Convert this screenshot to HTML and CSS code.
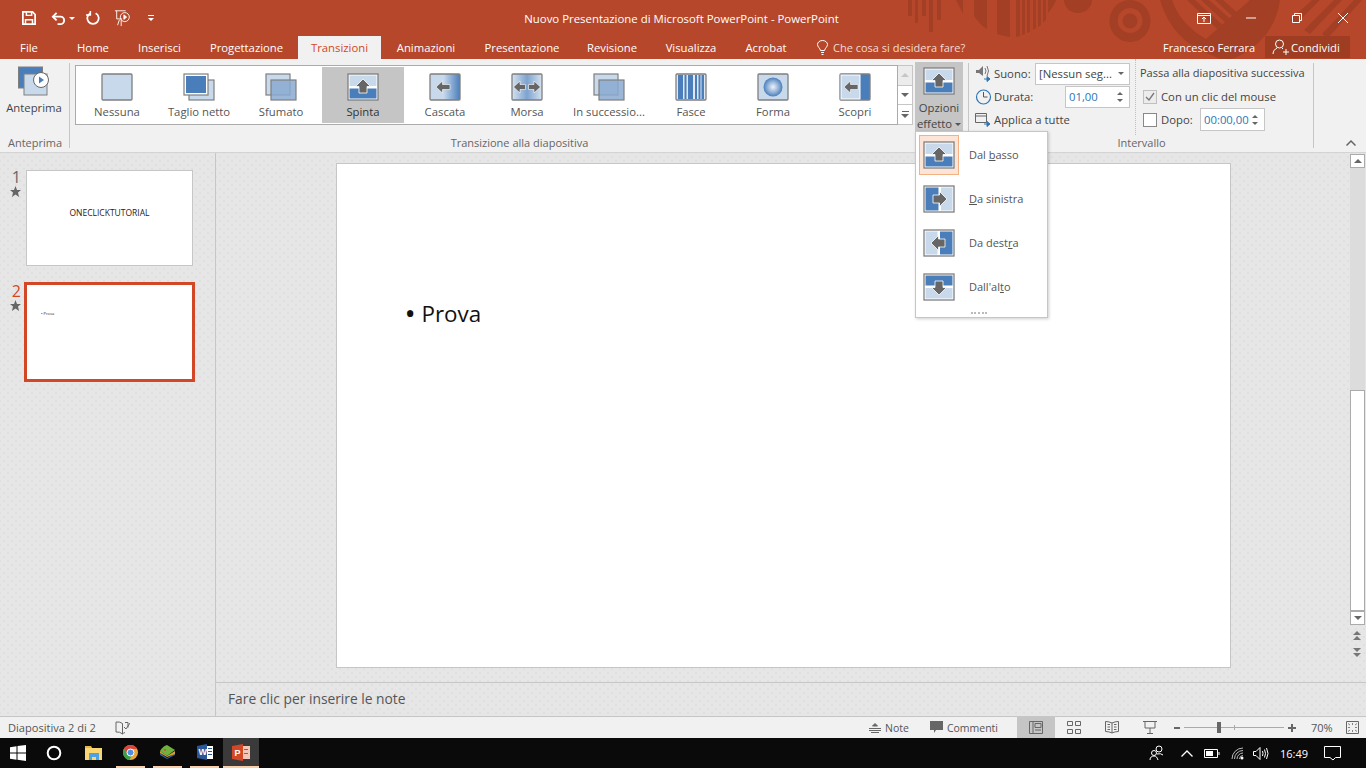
FILE: index.html
```html
<!DOCTYPE html>
<html lang="it">
<head>
    <meta charset="utf-8">
    <title>PowerPoint</title>
    <link rel="stylesheet" href="styles.css">
</head>
<body>
    <svg class="defs" width="0" height="0">
        <defs>
            <linearGradient id="fadeRight"><stop offset="0.45" stop-color="#c9d9ec"/><stop offset="1" stop-color="#4a7ebb"/></linearGradient>
            <linearGradient id="fadeMid"><stop offset="0" stop-color="#d5e1f0"/><stop offset="0.5" stop-color="#7ea3cf"/><stop offset="1" stop-color="#d5e1f0"/></linearGradient>
            <radialGradient id="fadeRound"><stop offset="0" stop-color="#eef3f9"/><stop offset="0.6" stop-color="#8fb0d6"/><stop offset="1" stop-color="#4a7ebb"/></radialGradient>
            <symbol id="t-none" viewBox="0 0 32 28"><rect x="1" y="1" width="30" height="26" rx="1" fill="#c9d9ec" stroke="#7f7f7f" stroke-width="1.3"/></symbol>
            <symbol id="t-cut" viewBox="0 0 32 28"><rect x="6" y="7" width="25" height="20" fill="#c9d9ec" stroke="#7f7f7f" stroke-width="1.2"/><rect x="1" y="1" width="24" height="21" fill="#fff" stroke="#7f7f7f" stroke-width="1.2"/><rect x="3" y="3" width="20" height="17" fill="#4a7ebb"/></symbol>
            <symbol id="t-fade" viewBox="0 0 32 28"><rect x="1" y="1" width="24" height="21" fill="#c9d9ec" stroke="#7f7f7f" stroke-width="1.2"/><rect x="6" y="7" width="25" height="20" fill="#89a9d0" fill-opacity="0.85" stroke="#7f7f7f" stroke-width="1.2"/></symbol>
            <symbol id="t-push" viewBox="0 0 32 28"><rect x="1" y="1" width="30" height="26" fill="#fff" stroke="#7f7f7f" stroke-width="1.3"/><rect x="2.500" y="2.500" width="27" height="10.500" fill="#c9d9ec"/><rect x="2.500" y="15.500" width="27" height="10" fill="#4a7ebb"/><path d="M16 6l7.500 7.500H20v6.500h-8v-6.500H8.500z" fill="#666" stroke="#fff" stroke-width=".8"/></symbol>
            <symbol id="t-left" viewBox="0 0 32 28"><rect x="1" y="1" width="30" height="26" fill="#fff" stroke="#7f7f7f" stroke-width="1.3"/><rect x="2.500" y="2.500" width="13" height="23" fill="#4a7ebb"/><rect x="18" y="2.500" width="11.500" height="23" fill="#c9d9ec"/><path d="M24 14l-7.500-7.500V10H10v8h6.500v3.500z" fill="#666" stroke="#fff" stroke-width=".8"/></symbol>
            <symbol id="t-right" viewBox="0 0 32 28"><rect x="1" y="1" width="30" height="26" fill="#fff" stroke="#7f7f7f" stroke-width="1.3"/><rect x="2.500" y="2.500" width="12" height="23" fill="#c9d9ec"/><rect x="17" y="2.500" width="12.500" height="23" fill="#4a7ebb"/><path d="M8 14l7.500-7.500V10H22v8h-6.500v3.500z" fill="#666" stroke="#fff" stroke-width=".8"/></symbol>
            <symbol id="t-top" viewBox="0 0 32 28"><rect x="1" y="1" width="30" height="26" fill="#fff" stroke="#7f7f7f" stroke-width="1.3"/><rect x="2.500" y="2.500" width="27" height="10" fill="#4a7ebb"/><rect x="2.500" y="15" width="27" height="10.500" fill="#c9d9ec"/><path d="M16 22l7.500-7.500H20V8h-8v6.500H8.500z" fill="#666" stroke="#fff" stroke-width=".8"/></symbol>
            <symbol id="t-fall" viewBox="0 0 32 28"><rect x="1" y="1" width="30" height="26" rx="1" fill="url(#fadeRight)" stroke="#7f7f7f" stroke-width="1.3"/><path d="M7 14l6.500-6v3.500H21v5h-7.500V20z" fill="#666" stroke="#fff" stroke-width=".6"/></symbol>
            <symbol id="t-clamp" viewBox="0 0 32 28"><rect x="1" y="1" width="30" height="26" rx="1" fill="url(#fadeMid)" stroke="#7f7f7f" stroke-width="1.3"/><path d="M2.500 14L9 8v3.500h5.500v5H9V20zM29.500 14L23 8v3.500h-5.500v5H23V20z" fill="#666" stroke="#fff" stroke-width=".6"/></symbol>
            <symbol id="t-bands" viewBox="0 0 32 28"><rect x="1" y="1" width="30" height="26" rx="1" fill="#dfe8f3" stroke="#7f7f7f" stroke-width="1.3"/><path d="M3 2h5v24H3zM9.500 2h2v24h-2zM13 2h5v24h-5zM20 2h2v24h-2zM23.500 2h2v24h-2zM26.500 2h2.500v24h-2.500z" fill="#4a7ebb"/></symbol>
            <symbol id="t-shape" viewBox="0 0 32 28"><rect x="1" y="1" width="30" height="26" rx="1" fill="#c9d9ec" stroke="#7f7f7f" stroke-width="1.3"/><circle cx="16" cy="14" r="9.500" fill="url(#fadeRound)"/></symbol>
            <symbol id="t-reveal" viewBox="0 0 32 28"><rect x="1" y="1" width="30" height="26" rx="1" fill="#4a7ebb" stroke="#7f7f7f" stroke-width="1.3"/><rect x="2" y="2" width="19" height="24" fill="#c9d9ec" stroke="#fff"/><path d="M5 14l6.500-6v3.500H19v5h-7.500V20z" fill="#666" stroke="#fff" stroke-width=".6"/></symbol>
        </defs>
    </svg>

    <header class="head">
        <svg class="pattern" width="466" height="59" viewBox="900 0 466 59" fill="#a33f25">
            <path d="M908 0h4v16h-4zM915 0h3v23h-3zM922 0h4v16h-4zM929 0h4v32h-4zM937 0h4v20h-4zM956 0h7v14z"/>
            <path d="M974 0h13v29q-7-4-13-13zM997 0h13v37q-7-1-13-3zM1016 0h4v36l-4 1zM1022 0h3v34l-3 1zM1027 0h3v32l-3 1zM1033 0h3v28l-3 2zM1038 0h3v25l-3 2zM1043 0h3v20l-3 3zM1048 0h8q-2 6-8 13z"/>
            <path d="M1064 0a14 13 0 0 0 28 0z"/>
            <path fill-rule="evenodd" d="M1130 0a20.500 21 0 1 1-.1 0zM1130 8a12.500 12.500 0 1 0 .1 0z"/>
            <circle cx="1130" cy="21" r="7.500"/>
            <path d="M1160 0h12q8 24 34 39l44-39h30q-4 30-28 48t-38 8q-42-14-54-56z"/>
            <path d="M1187 0h8l44 40-6 4zM1201 0h8l36 32-5 4zM1215 0h8l27 24-5 4z"/>
            <path d="M1290 20l22-20h8l-24 24zM1304 30l30-30h8l-32 34zM1322 34l32-34h8l-34 38z"/>
        </svg>
        <div class="titlebar">
            <div class="qat">
                <svg class="q-save" width="14" height="14" viewBox="0 0 16 16" fill="none" stroke="#fff" stroke-width="2"><path d="M1 1h11l3 3v11H1z"/><path d="M5 1v4h6V1M4 15v-5h8v5" stroke-width="1.700"/></svg>
                <svg class="q-undo" width="15" height="15" viewBox="0 0 16 16" fill="none" stroke="#fff" stroke-width="2"><path d="M6 2L2 6l4 4"/><path d="M2 6h8a4 4 0 0 1 0 8H7"/></svg>
                <span class="caret q-caret"></span>
                <svg class="q-redo" width="14" height="14" viewBox="0 0 16 16" fill="none" stroke="#fff" stroke-width="2"><path d="M11 2.500a6.500 6.500 0 1 1-6 0"/><path d="M5 0v4.500H0" stroke-width="1.700"/></svg>
                <svg class="q-show" width="18" height="18" viewBox="0 0 20 20" fill="none" stroke="#fff"><path d="M1 2h12M3 2v9h6M6 12l-2 6M8 12v7"/><circle cx="12" cy="9" r="5"/><path d="M11 6.500l3 2.500-3 2.500z" fill="#fff"/></svg>
                <svg class="q-more" width="8" height="8" viewBox="0 0 8 8" fill="#fff"><path d="M1 1h6v1H1zM1 4h6L4 7z"/></svg>
            </div>
            <div class="doc-title">Nuovo Presentazione di Microsoft PowerPoint - PowerPoint</div>
            <div class="winctl">
                <svg width="14" height="11" viewBox="0 0 14 11" fill="none" stroke="#fff"><path d="M.5.500h13v10H.5zM.5 2.500h13M7 9V4.500M5 6l2-2 2 2"/></svg>
                <svg class="w-min" width="10" height="2" viewBox="0 0 10 2" stroke="#fff"><path d="M0 1h10"/></svg>
                <svg class="w-max" width="10" height="10" viewBox="0 0 10 10" fill="none" stroke="#fff"><path d="M.5 2.500h7v7h-7zM2.500 2.500v-2h7v7h-2"/></svg>
                <svg class="w-close" width="10" height="10" viewBox="0 0 10 10" stroke="#fff"><path d="M0 0l10 10M10 0L0 10"/></svg>
            </div>
        </div>
        <nav class="tabs">
            <a class="tab">File</a>
            <a class="tab">Home</a>
            <a class="tab">Inserisci</a>
            <a class="tab">Progettazione</a>
            <a class="tab active">Transizioni</a>
            <a class="tab">Animazioni</a>
            <a class="tab">Presentazione</a>
            <a class="tab">Revisione</a>
            <a class="tab">Visualizza</a>
            <a class="tab">Acrobat</a>
            <div class="tell">
                <svg width="11" height="15" viewBox="0 0 11 15" fill="none" stroke="#fff"><path d="M3.500 10.500C3 8 .5 7 .5 4.500a5 4 0 0 1 10 0c0 2.500-2.500 3.500-3 6zM4 12.500h3M4.500 14.500h2"/></svg>
                <span>Che cosa si desidera fare?</span>
            </div>
            <div class="user">Francesco Ferrara</div>
            <div class="share">
                <svg width="17" height="16" viewBox="0 0 17 16" fill="none" stroke="#fff"><circle cx="7.500" cy="5" r="4"/><path d="M1 15c0-3 2-5 4-6M10 9l1 1M11 13h6M14 10v6"/></svg>
                <span>Condividi</span>
            </div>
        </nav>
    </header>

    <section class="ribbon">
        <div class="group g-preview">
            <div class="group-body preview-btn">
                <svg width="32" height="31" viewBox="0 0 32 31"><rect x=".5" y="1" width="24" height="21" fill="#4a7ebb" stroke="#7f7f7f"/><rect x="6" y="8" width="23" height="21" fill="#c9d9ec" stroke="#7f7f7f"/><circle cx="23" cy="14" r="7.500" fill="#fff" stroke="#666"/><path d="M21 10.500l5 3.500-5 3.500z" fill="#4a7ebb"/></svg>
                <span>Anteprima</span>
            </div>
            <div class="group-label">Anteprima</div>
        </div>

        <div class="group g-trans">
            <div class="group-body trans-body">
                <div class="gallery">
                    <div class="cell"><svg><use href="#t-none"/></svg><span>Nessuna</span></div>
                    <div class="cell"><svg><use href="#t-cut"/></svg><span>Taglio netto</span></div>
                    <div class="cell"><svg><use href="#t-fade"/></svg><span>Sfumato</span></div>
                    <div class="cell selected"><svg><use href="#t-push"/></svg><span>Spinta</span></div>
                    <div class="cell"><svg><use href="#t-fall"/></svg><span>Cascata</span></div>
                    <div class="cell"><svg><use href="#t-clamp"/></svg><span>Morsa</span></div>
                    <div class="cell"><svg><use href="#t-fade"/></svg><span>In successio...</span></div>
                    <div class="cell"><svg><use href="#t-bands"/></svg><span>Fasce</span></div>
                    <div class="cell"><svg><use href="#t-shape"/></svg><span>Forma</span></div>
                    <div class="cell"><svg><use href="#t-reveal"/></svg><span>Scopri</span></div>
                </div>
                <div class="gal-scroll">
                    <div class="gal-btn off"><span class="tri up"></span></div>
                    <div class="gal-btn"><span class="tri"></span></div>
                    <div class="gal-btn more"><span class="bar"></span><span class="tri"></span></div>
                </div>
                <div class="effect-btn">
                    <svg><use href="#t-push"/></svg>
                    <span>Opzioni</span>
                    <span>effetto <i class="caret dark"></i></span>
                </div>
            </div>
            <div class="group-label">Transizione alla diapositiva</div>
        </div>

        <div class="group g-timing">
            <div class="group-body timing-body">
                <div class="col-sound">
                    <div class="row">
                        <svg class="ico" width="17" height="17" viewBox="0 0 17 17"><path d="M1 5h3l4-4v10l-4-3H1z" fill="#777"/><path d="M10 3q2 3 0 6M12 1q3 5 0 10" fill="none" stroke="#777"/><path d="M9 14h5M12 11.500l3 2.500-3 2.500z" fill="#2e75b6" stroke="#2e75b6"/></svg>
                        <label class="lbl-a">Suono:</label>
                        <div class="field f-sound"><span>[Nessun seg...</span><span class="tri small"></span></div>
                    </div>
                    <div class="row">
                        <svg class="ico" width="16" height="16" viewBox="0 0 16 16" fill="none"><circle cx="8" cy="8" r="7" stroke="#2e75b6" stroke-width="1.200"/><path d="M8 3v5h4" stroke="#555"/></svg>
                        <label class="lbl-a">Durata:</label>
                        <div class="field f-num"><span class="val">01,00</span><span class="spin"><i class="tri up small"></i><i class="tri small"></i></span></div>
                    </div>
                    <div class="row">
                        <svg class="ico" width="17" height="15" viewBox="0 0 17 15" fill="none" stroke="#666"><path d="M.5 1.500h11v9H.5zM.5 4h11"/><path d="M9 12h5M12 9.500l3 2.500-3 2.500z" fill="#2e75b6" stroke="#2e75b6"/></svg>
                        <label>Applica a tutte</label>
                    </div>
                </div>
                <div class="col-advance">
                    <div class="adv-title">Passa alla diapositiva successiva</div>
                    <div class="row">
                        <span class="check on"><svg width="12" height="12" viewBox="0 0 12 12" fill="none" stroke="#777" stroke-width="1.300"><path d="M2 6l3 3 5-7"/></svg></span>
                        <label>Con un clic del mouse</label>
                    </div>
                    <div class="row">
                        <span class="check"></span>
                        <label class="lbl-b">Dopo:</label>
                        <div class="field f-num"><span class="val">00:00,00</span><span class="spin"><i class="tri up small"></i><i class="tri small"></i></span></div>
                    </div>
                </div>
            </div>
            <div class="group-label">Intervallo</div>
        </div>
        <div class="collapse"><svg width="10" height="6" viewBox="0 0 10 6" fill="none" stroke="#666" stroke-width="1.500"><path d="M.5 5.500L5 1l4.500 4.500"/></svg></div>
    </section>

    <main class="main">
        <aside class="thumbs">
            <div class="thumb-row">
                <div class="thumb-num"><span>1</span><svg width="11" height="11" viewBox="0 0 11 11"><path d="M5.500 0l1.500 4h4L8 6.500l1 4.500-3.500-2.500L2 11l1-4.500L0 4h4z" fill="#666"/></svg></div>
                <div class="thumb"><span class="thumb-title">ONECLICKTUTORIAL</span></div>
            </div>
            <div class="thumb-row current">
                <div class="thumb-num"><span>2</span><svg width="11" height="11" viewBox="0 0 11 11"><path d="M5.500 0l1.500 4h4L8 6.500l1 4.500-3.500-2.500L2 11l1-4.500L0 4h4z" fill="#666"/></svg></div>
                <div class="thumb"><span class="thumb-text">• Prova</span></div>
            </div>
        </aside>
        <div class="editor">
            <div class="stage-row">
                <div class="stage">
                    <div class="slide"><div class="slide-text"><span class="bullet">•</span>Prova</div></div>
                </div>
                <div class="vscroll">
                    <div class="vs-btn"><span class="tri up"></span></div>
                    <div class="vs-track"></div>
                    <div class="vs-thumb"></div>
                    <div class="vs-btn"><span class="tri"></span></div>
                    <svg class="vs-jump" width="10" height="30" viewBox="0 0 10 30" fill="#777"><path d="M5 1l4 4H1zM5 6l4 4H1zM1 18h8l-4 4zM1 23h8l-4 4z"/></svg>
                </div>
            </div>
            <div class="notes">Fare clic per inserire le note</div>
        </div>
    </main>

    <footer class="status">
        <span class="st-count">Diapositiva 2 di 2</span>
        <svg class="st-proof" width="15" height="14" viewBox="0 0 15 14" fill="none" stroke="#666"><path d="M7.500 2.500Q5 .5 1 1v10q4-.5 6.500 2v-10.500zM7.500 13q1-1 2.500-1.500M10 1.500h3v5M9 6l2 2 4-6"/></svg>
        <div class="st-right">
            <div class="st-item i-note">
                <svg width="12" height="12" viewBox="0 0 12 12" stroke="#666" fill="#666"><path d="M3.500 4L6 1.500 8.500 4zM0 6.500h12M0 8.500h12M2 10.500h8" /></svg>
                <span>Note</span>
            </div>
            <div class="st-item i-comment">
                <svg width="13" height="13" viewBox="0 0 13 13" fill="#666"><path d="M0 0h13v9H6l-2 3V9H0z"/></svg>
                <span>Commenti</span>
            </div>
            <div class="view selected"><svg width="14" height="13" viewBox="0 0 14 13" fill="none" stroke="#666"><path d="M.5.500h13v12H.5zM4 .5v12M6 2.500h6v4H6zM6 9h6"/></svg></div>
            <div class="view"><svg width="14" height="13" viewBox="0 0 14 13" fill="none" stroke="#666"><path d="M.5.500h5v4h-5zM8.500.500h5v4h-5zM.5 8.500h5v4h-5zM8.500 8.500h5v4h-5z"/></svg></div>
            <div class="view"><svg width="14" height="13" viewBox="0 0 14 13" fill="none" stroke="#666"><path d="M7 2Q4 .5.500.5v10Q4 10.500 7 12q3-1.500 6.500-1.500V.5Q10 .5 7 2zM7 2v10M2.500 3.500H5M2.500 6H5M9 3.500h2.500M9 6h2.500M9 8.500h2.500M2.500 8.500H5"/></svg></div>
            <div class="view"><svg width="14" height="13" viewBox="0 0 14 13" fill="none" stroke="#666"><path d="M0 .5h14M2 1v6h10V1M7 7v5M4 12.500h6"/></svg></div>
            <div class="zoom">
                <span class="z-btn minus"></span>
                <div class="z-track"><span class="z-mid"></span><span class="z-knob"></span></div>
                <span class="z-btn plus"></span>
            </div>
            <span class="z-val">70%</span>
            <svg class="z-fit" width="13" height="13" viewBox="0 0 13 13" fill="none" stroke="#666"><path d="M.5.500h12v12H.5z"/><path d="M4 4L2 2.500M9 4l2-1.500M4 9l-2 1.500M9 9l2 1.500M6.500 2v2M6.500 9v2M2 6.500h2M9 6.500h2" stroke-width=".8"/></svg>
        </div>
    </footer>

    <div class="menu">
        <div class="menu-item current"><span class="m-icon"><svg><use href="#t-push"/></svg></span><span class="m-text">Dal <u>b</u>asso</span></div>
        <div class="menu-item"><span class="m-icon"><svg><use href="#t-left"/></svg></span><span class="m-text"><u>D</u>a sinistra</span></div>
        <div class="menu-item"><span class="m-icon"><svg><use href="#t-right"/></svg></span><span class="m-text">Da dest<u>r</u>a</span></div>
        <div class="menu-item"><span class="m-icon"><svg><use href="#t-top"/></svg></span><span class="m-text">Dall'al<u>t</u>o</span></div>
        <div class="grip"></div>
    </div>

    <div class="taskbar">
        <svg class="tb-win" width="16" height="16" viewBox="0 0 16 16" fill="#fff"><path d="M0 2.300l6.500-1v6.300H0zM7.500 1.100L16 0v7.600H7.500zM0 8.500h6.500v6.200l-6.500-1zM7.500 8.500H16V16l-8.500-1.200z"/></svg>
        <svg class="tb-cortana" width="16" height="16" viewBox="0 0 16 16" fill="none" stroke="#fff" stroke-width="2"><circle cx="8" cy="8" r="6.300"/></svg>
        <div class="tb-app">
            <svg width="17" height="15" viewBox="0 0 17 15"><path d="M0 1h6l1 2h10v12H0z" fill="#fbd774"/><path d="M0 1h6v2H0z" fill="#e7b54b"/><path d="M4 8h10v7h-3v-3H7v3H4z" fill="#4ba3e3"/></svg>
        </div>
        <div class="tb-app open">
            <svg width="15" height="15" viewBox="0 0 15 15"><circle cx="7.500" cy="7.500" r="7.500" fill="#e8a33a"/><path d="M7.500 0A7.500 7.500 0 0 0 1 3.700L4 9h3.500V4H14A7.500 7.500 0 0 0 7.500 0z" fill="#d8473b"/><path d="M1 3.700A7.500 7.500 0 0 0 6.500 15L9 10H5z" fill="#3f9c4d"/><circle cx="7.500" cy="7.500" r="3.500" fill="#4f8fe0" stroke="#fff"/></svg>
        </div>
        <div class="tb-app open">
            <svg width="15" height="14" viewBox="0 0 15 14"><path d="M0 8l7 5 8-5v2l-8 4-7-4z" fill="#2f5fa8"/><path d="M0 6l7 5 8-5v3l-8 3-7-4z" fill="#d9a128"/><path d="M7 0l8 5-8 6-7-5q3-5 7-6z" fill="#6fb13f"/><circle cx="5" cy="5" r="1" fill="#cb4b36"/></svg>
        </div>
        <div class="tb-app open">
            <svg width="16" height="16" viewBox="0 0 16 16"><path d="M5 2h11v13H5z" fill="#fff"/><path d="M11 4h4v1h-4zM11 7h4v1h-4zM11 10h4v1h-4z" fill="#2b579a"/><path d="M0 2l10-2v16L0 14z" fill="#2b579a"/><text x="1.500" y="11" class="tb-letter">W</text></svg>
        </div>
        <div class="tb-app open active">
            <svg width="19" height="17" viewBox="0 0 19 17"><path d="M9 2h9v13H9z" fill="#f4c7b6"/><path d="M12 5h4v1h-4zM12 9h4v1h-4z" fill="#d24726"/><path d="M0 2l11-2v17L0 15z" fill="#d24726"/><text x="2.500" y="12" class="tb-letter">P</text></svg>
        </div>
        <div class="tray">
            <svg class="t-people" width="15" height="16" viewBox="0 0 15 16" fill="none" stroke="#fff"><circle cx="10" cy="4" r="3"/><circle cx="5" cy="8" r="2.500"/><path d="M1 15c0-3 2-4 4-4s3 1 4 4M8 9q4-1 6 1"/></svg>
            <svg class="t-chev" width="12" height="7" viewBox="0 0 12 7" fill="none" stroke="#fff" stroke-width="1.300"><path d="M.5 6.500L6 1l5.500 5.500"/></svg>
            <svg class="t-batt" width="16" height="9" viewBox="0 0 16 9" fill="none" stroke="#fff"><path d="M.5.500h13v8H.5z"/><path d="M2 2h7v5H2z" fill="#fff" stroke="none"/><path d="M15 3v3"/></svg>
            <svg class="t-wifi" width="13" height="13" viewBox="0 0 13 13" fill="none" stroke="#bbb"><path d="M1 12a11 11 0 0 1 11-11M3.500 12a8.500 8.500 0 0 1 8.500-8.500M6 12a6 6 0 0 1 6-6M8.500 12a3.500 3.500 0 0 1 3.500-3.500"/><circle cx="11" cy="11" r="1.500" fill="#fff" stroke="none"/></svg>
            <svg class="t-vol" width="16" height="13" viewBox="0 0 16 13" fill="none" stroke="#fff"><path d="M.5 4.500h2.500L7 .5v12l-4-4H.5zM9.500 4q1 2.500 0 5M11.500 2.500q2 4 0 8M13.500 1q3 5.500 0 11"/></svg>
            <span class="t-time">16:49</span>
            <svg class="t-note" width="17" height="15" viewBox="0 0 17 15" fill="none" stroke="#fff"><path d="M.5.500h16v11h-5L9 14l-3-2.500H.5z"/></svg>
        </div>
    </div>
</body>
</html>
```

FILE: styles.css
```css
* { box-sizing: border-box; }
html, body { margin: 0; padding: 0; }
body {
    position: relative;
    width: 1366px;
    height: 768px;
    overflow: hidden;
    display: flex;
    flex-direction: column;
    background: #f1f1f1;
    color: #444;
    font-family: "Open Sans", "Noto Sans", sans-serif;
    font-size: 11.3px;
    white-space: nowrap;
}
svg { display: block; flex: none; }
.defs { position: absolute; }

/* title bar and tabs */
.head {
    position: relative;
    height: 59px;
    flex: none;
    background: #b7472a;
    color: #fff;
}
.pattern { position: absolute; right: 0; top: 0; }
.titlebar {
    position: relative;
    height: 36px;
    display: grid;
    grid-template-columns: 1fr auto 1fr;
    align-items: center;
    padding-right: 3px;
}
.qat { display: flex; align-items: center; padding-left: 22px; }
.q-undo { margin-left: 15px; }
.q-caret { margin-left: 3px; }
.q-redo { margin-left: 11px; }
.q-show { margin-left: 14px; }
.q-more { margin-left: 15px; }
.doc-title { font-size: 11.4px; }
.winctl { display: flex; align-items: center; justify-content: flex-end; padding-right: 15px; }
.w-min { margin-left: 35px; }
.w-max { margin-left: 36px; }
.w-close { margin-left: 36px; }
.caret {
    display: inline-block;
    border-left: 3px solid transparent;
    border-right: 3px solid transparent;
    border-top: 3px solid #fff;
    vertical-align: middle;
}
.caret.dark { border-top-color: #555; }

.tabs { position: relative; display: flex; height: 23px; align-items: stretch; }
.tab { display: flex; align-items: center; justify-content: center; }
.tab:nth-child(1) { width: 58px; margin-right: 4px; }
.tab:nth-child(2) { width: 62px; }
.tab:nth-child(3) { width: 71px; }
.tab:nth-child(4) { width: 103px; }
.tab:nth-child(5) { width: 83px; }
.tab:nth-child(6) { width: 90px; }
.tab:nth-child(7) { width: 102px; }
.tab:nth-child(8) { width: 78px; }
.tab:nth-child(9) { width: 80px; }
.tab:nth-child(10) { width: 70px; }
.tab.active { background: #f1f1f1; color: #d24726; }
.tell { display: flex; align-items: center; gap: 5px; margin-left: 16px; color: #f3dcd5; width: 346px; font-size: 11px; }
.user { display: flex; align-items: center; width: 102px; font-size: 11px; }
.share {
    display: flex;
    align-items: center;
    gap: 2px;
    width: 85px;
    margin-bottom: 1px;
    padding-left: 7px;
    background: #9e3d22;
}

/* ribbon */
.ribbon {
    position: relative;
    height: 94px;
    flex: none;
    display: flex;
    background: #f1f1f1;
    border-bottom: 1px solid #d4d4d4;
}
.group { display: flex; flex-direction: column; }
.group-body { height: 77px; flex: none; }
.group-label { text-align: center; font-size: 11px; color: #666; line-height: 14px; }
.g-preview { width: 70px; padding-top: 4px; position: relative; }
.g-preview::after, .g-trans::after, .g-timing::after {
    content: "";
    position: absolute;
    right: 0;
    top: 4px;
    bottom: 4px;
    width: 1px;
    background: #c6c6c6;
}
.g-preview .group-body { height: 73px; }
.preview-btn { display: flex; flex-direction: column; align-items: center; gap: 3px; padding-top: 3px; color: #444; }
.preview-btn svg { margin-right: 2px; }
.preview-btn span { margin-right: 2px; }
.g-trans { width: 899px; position: relative; }
.trans-body { display: flex; align-items: flex-start; }
.gallery {
    display: flex;
    margin: 6px 0 0 5px;
    width: 823px;
    height: 60px;
    padding: 1px 0;
    background: #fff;
    border: 1px solid #ababab;
}
.cell {
    width: 82px;
    flex: none;
    display: flex;
    flex-direction: column;
    align-items: center;
    gap: 3px;
    padding-top: 6px;
    color: #555;
}
.cell svg { width: 32px; height: 28px; }
.cell.selected { background: #c5c5c5; color: #333; }
.gal-scroll { width: 15px; margin-top: 6px; height: 60px; display: flex; flex-direction: column; border: 1px solid #c6c6c6; border-left: 0; }
.gal-btn {
    flex: 1;
    display: flex;
    flex-direction: column;
    gap: 2px;
    align-items: center;
    justify-content: center;
    background: #fff;
    border-bottom: 1px solid #c6c6c6;
}
.gal-btn:last-child { border-bottom: 0; }
.gal-btn.off { background: #ececec; }
.gal-btn.off .tri { border-bottom-color: #c6c6c6; }
.bar { width: 7px; height: 1px; background: #666; }
.tri {
    display: block;
    width: 0;
    border-left: 4px solid transparent;
    border-right: 4px solid transparent;
    border-top: 4px solid #666;
}
.tri.up { border-top: 0; border-bottom: 4px solid #666; }
.tri.small { border-left-width: 3px; border-right-width: 3px; border-top-width: 3px; }
.tri.up.small { border-top-width: 0; border-bottom-width: 3px; }
.effect-btn {
    width: 48px;
    height: 69px;
    margin: 3px 0 0 2px;
    background: #c5c5c5;
    display: flex;
    flex-direction: column;
    align-items: center;
    padding-top: 5px;
    line-height: 16px;
    color: #444;
}
.effect-btn svg { width: 32px; height: 28px; margin-bottom: 5px; }
.g-timing { width: 345px; position: relative; }
.timing-body { display: flex; }
.col-sound {
    width: 167px;
    padding: 3px 0 0 6px;
    border-right: 1px dotted #c0c0c0;
    margin-bottom: 14px;
    height: 76px;
}
.col-advance { padding: 4px 0 0 4px; }
.row { display: flex; align-items: center; height: 23px; }
.ico { margin-right: 2px; width: 17px; }
.lbl-a { width: 41px; }
.field {
    display: flex;
    align-items: center;
    background: #fff;
    border: 1px solid #c6c6c6;
    height: 22px;
    padding-left: 3px;
    color: #444;
}
.f-sound { width: 95px; justify-content: space-between; padding-right: 5px; }
.f-num { width: 65px; justify-content: space-between; padding-right: 6px; margin-left: auto; }
.col-sound .f-num { margin-left: 30px; }
.val { color: #2e75b6; }
.spin { display: flex; flex-direction: column; gap: 4px; }
.adv-title { height: 22px; line-height: 20px; font-size: 11px; }
.col-advance .row { padding-left: 3px; }
.check {
    width: 14px;
    height: 14px;
    margin-right: 4px;
    background: #fff;
    border: 1px solid #888;
    flex: none;
}
.check.on { background: #ececec; border-color: #c0c0c0; }
.lbl-b { width: 39px; }
.col-advance .f-num { height: 23px; margin-left: 0; }
.collapse { position: absolute; right: 10px; bottom: 6px; }

/* main area */
.main {
    flex: 1;
    min-height: 0;
    display: flex;
    background-color: #e6e6e6;
    background-image: radial-gradient(#dfdfdf .7px, transparent .8px), radial-gradient(#dfdfdf .7px, transparent .8px);
    background-size: 8px 8px;
    background-position: 0 0, 4px 4px;
}
.thumbs {
    width: 216px;
    flex: none;
    padding-top: 17px;
    border-right: 1px solid #c6c6c6;
    display: flex;
    flex-direction: column;
    gap: 18px;
}
.thumb-row { display: flex; }
.thumb-num {
    width: 26px;
    display: flex;
    flex-direction: column;
    align-items: flex-end;
    padding-right: 5px;
    font-size: 16px;
    line-height: 15px;
    color: #666;
    gap: 1px;
}
.current .thumb-num span { color: #d24726; }
.thumb {
    position: relative;
    width: 167px;
    height: 96px;
    background: #fff;
    border: 1px solid #c6c6c6;
    color: #222;
}
.current .thumb { outline: 3px solid #d24726; outline-offset: -1px; border-color: #d24726; }
.thumb-title { display: block; margin-top: 37px; text-align: center; font-size: 8.5px; line-height: 10px; }
.thumb-text { display: block; font-size: 4px; padding: 26px 0 0 14px; }
.editor { flex: 1; min-width: 0; display: flex; flex-direction: column; }
.stage-row { flex: 1; min-height: 0; display: flex; }
.stage { flex: 1; display: flex; justify-content: center; padding-top: 10px; }
.slide {
    width: 895px;
    height: 505px;
    background: #fff;
    border: 1px solid #c6c6c6;
}
.slide-text { display: flex; align-items: center; padding: 134px 0 0 68px; font-size: 22.4px; line-height: 32px; color: #111; }
.bullet { display: block; width: 17px; font-size: 30px; line-height: 32px; margin-top: -2px; }
.vscroll { width: 16px; padding-top: 1px; margin-right: 0; display: flex; flex-direction: column; }
.vs-btn {
    width: 15px;
    height: 14px;
    flex: none;
    background: #fff;
    border: 1px solid #ababab;
    display: flex;
    align-items: center;
    justify-content: center;
}
.vs-track { width: 15px; height: 222px; flex: none; background: #dcdcdc; }
.vs-thumb { width: 15px; height: 221px; flex: none; background: #fff; border: 1px solid #ababab; }
.vs-jump { margin: 5px 0 0 2px; }
.notes {
    height: 34px;
    flex: none;
    border-top: 1px solid #c6c6c6;
    padding: 6px 0 0 12px;
    font-size: 13.8px;
    line-height: 20px;
    color: #555;
}

/* status bar */
.status {
    height: 22px;
    flex: none;
    display: flex;
    align-items: center;
    padding-left: 8px;
    background: #f1f1f1;
    border-top: 1px solid #c6c6c6;
    color: #555;
    font-size: 10.5px;
}
.st-count { width: 107px; font-size: 11.1px; }
.st-right { margin-left: auto; display: flex; align-items: center; height: 100%; padding-right: 7px; }
.st-item { display: flex; align-items: center; gap: 4px; }
.i-note { margin-right: 21px; }
.i-comment { margin-right: 19px; }
.view { width: 38px; height: 100%; display: flex; align-items: center; justify-content: center; }
.view.selected { background: #c5c5c5; }
.zoom { display: flex; align-items: center; margin-left: 5px; }
.z-btn { position: relative; display: block; width: 8px; height: 2px; background: #666; }
.z-btn.minus { width: 6px; margin-left: 0; }
.z-btn.plus::after { content: ""; position: absolute; left: 3px; top: -3px; width: 2px; height: 8px; background: #666; }
.z-track { position: relative; width: 100px; height: 1px; margin: 0 4px; background: #aaa; }
.z-knob { position: absolute; left: 33px; top: -5px; width: 4px; height: 11px; background: #666; }
.z-mid { position: absolute; left: 50px; top: -2px; width: 1px; height: 5px; background: #aaa; }
.z-val { margin-left: 15px; width: 35px; font-size: 11px; }

/* effect options dropdown */
.menu {
    position: absolute;
    left: 915px;
    top: 131px;
    width: 133px;
    height: 187px;
    padding: 1px 0 0 3px;
    background: #fff;
    border: 1px solid #c6c6c6;
    box-shadow: 1px 1px 3px rgba(0, 0, 0, .2);
    color: #555;
    font-size: 11px;
}
.menu-item { display: flex; align-items: center; height: 44px; }
.m-icon {
    width: 40px;
    height: 40px;
    margin-right: 10px;
    display: flex;
    align-items: center;
    justify-content: center;
    border: 1px solid transparent;
}
.m-icon svg { width: 32px; height: 28px; }
.m-text { margin-bottom: 2px; }
.current .m-icon { background: #fce4d6; border-color: #f4b183; }
.menu-item u { text-underline-offset: 1px; }
.grip { width: 16px; margin: 3px 0 0 52px; border-top: 2px dotted #bbb; }

/* taskbar */
.taskbar {
    height: 30px;
    flex: none;
    display: flex;
    align-items: center;
    background: #0a0a0a;
    color: #fff;
}
.tb-win { margin-left: 10px; }
.tb-cortana { margin-left: 20px; margin-right: 13px; }
.tb-app {
    width: 37px;
    height: 30px;
    display: flex;
    align-items: center;
    justify-content: center;
    border-bottom: 2px solid transparent;
    background-clip: padding-box;
}
.tb-app.open { position: relative; }
.tb-app.open::after {
    content: "";
    position: absolute;
    left: 4px;
    right: 4px;
    bottom: -2px;
    height: 2px;
    background: #f8cfa8;
}
.tb-app.active { background: #3a3a3a; width: 36px; }
.tb-app.active::after { left: 0; right: 0; }
.tb-letter { font-size: 9px; font-weight: 700; fill: #fff; font-family: "Liberation Sans", sans-serif; }
.tray { margin-left: auto; display: flex; align-items: center; padding-right: 25px; }
.t-chev { margin-left: 17px; }
.t-batt { margin-left: 11px; }
.t-wifi { margin-left: 11px; }
.t-vol { margin-left: 9px; }
.t-time { margin-left: 11px; font-size: 11px; width: 27px; }
.t-note { margin-left: 17px; }
```
